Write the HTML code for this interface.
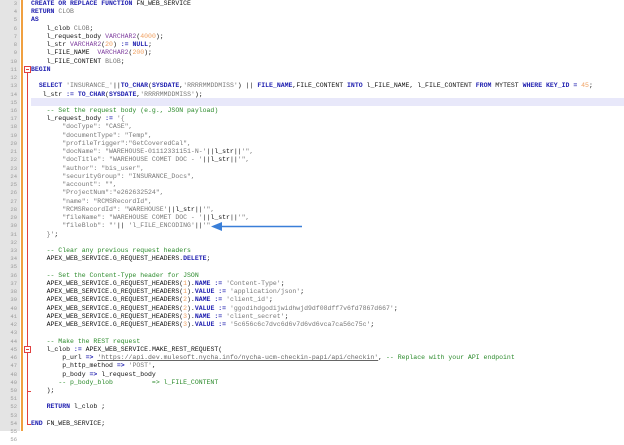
<!DOCTYPE html>
<html><head><meta charset="utf-8"><style>
*{margin:0;padding:0;box-sizing:border-box}
body{width:624px;height:431px;overflow:hidden;background:#fff;position:relative;font-family:"Liberation Mono",monospace}
#gut{position:absolute;left:0;top:0;width:20px;height:431px;background:#e4e4e4}
#bar{position:absolute;left:21px;top:0;width:2px;height:431px;background:#f0a040}
#hl{position:absolute;left:31px;right:0;top:98px;height:8.3px;background:#e8e8fa}
#nums{position:absolute;left:0;top:-16.5px;width:17px;text-align:right;font-size:5.5px;line-height:8.24px;color:#9a9a9a}
#code{position:absolute;left:31px;top:-16.5px;font-size:6.5px;line-height:8.24px;color:#111;white-space:pre}
.k{color:#2020b0;font-weight:bold}.s{color:#777}.n{color:#f0a060}.c{color:#2a8a2a}.t{color:#8040a0}.o{color:#2020b0;font-weight:bold}.u{color:#666;text-decoration:underline}
.fl{position:absolute;background:#e04040}
</style></head><body>
<div id="gut"></div><div id="bar"></div><div id="hl"></div>
<div class="fl" style="left:27px;top:72px;width:1px;height:352px"></div>
<div class="fl" style="left:27px;top:424px;width:4px;height:1px"></div>
<div style="position:absolute;left:24px;top:66px;width:7px;height:7px;border:1px solid #e04040;background:#fff"><div style="position:absolute;left:1px;top:2px;width:3px;height:1px;background:#e04040"></div></div>
<div style="position:absolute;left:24px;top:346px;width:7px;height:7px;border:1px solid #e04040;background:#fff"><div style="position:absolute;left:1px;top:2px;width:3px;height:1px;background:#e04040"></div></div>
<div class="fl" style="left:27px;top:391px;width:4px;height:1px"></div>
<div id="nums"><script>for(let i=1;i<=56;i++)document.write(i+'<br>')</script></div>
<div id="code"><span class="k">CREATE OR REPLACE FUNCTION</span> FN_WEB_SERVICE
<span class="k">RETURN</span> CLOB
<span class="k">CREATE OR REPLACE FUNCTION</span> FN_WEB_SERVICE
<span class="k">RETURN</span> <span class="s">CLOB</span>
<span class="k">AS</span>
    l_clob <span class="s">CLOB</span>;
    l_request_body <span class="t">VARCHAR2</span>(<span class="n">4000</span>);
    l_str <span class="t">VARCHAR2</span>(<span class="n">20</span>) <span class="o">:=</span> <span class="k">NULL</span>;
    l_FILE_NAME  <span class="t">VARCHAR2</span>(<span class="n">200</span>);
    l_FILE_CONTENT <span class="s">BLOB</span>;
<span class="k">BEGIN</span>

  <span class="k">SELECT</span> <span class="s">'INSURANCE_'</span>||<span class="k">TO_CHAR</span>(<span class="k">SYSDATE</span>,<span class="s">'RRRRMMDDMISS'</span>) || <span class="k">FILE_NAME</span>,FILE_CONTENT <span class="k">INTO</span> l_FILE_NAME, l_FILE_CONTENT <span class="k">FROM</span> MYTEST <span class="k">WHERE KEY_ID</span> <span class="o">=</span> <span class="n">45</span>;
   l_str <span class="o">:=</span> <span class="k">TO_CHAR</span>(<span class="k">SYSDATE</span>,<span class="s">'RRRRMMDDMISS'</span>);

    <span class="c">-- Set the request body (e.g., JSON payload)</span>
    l_request_body <span class="o">:=</span> <span class="s">'{</span>
<span class="s">        "docType": "CASE",</span>
<span class="s">        "documentType": "Temp",</span>
<span class="s">        "profileTrigger":"GetCoveredCal",</span>
<span class="s">        "docName": "WAREHOUSE-01112331151-N-'</span>||l_str||<span class="s">'",</span>
<span class="s">        "docTitle": "WAREHOUSE COMET DOC - '</span>||l_str||<span class="s">'",</span>
<span class="s">        "author": "bis_user",</span>
<span class="s">        "securityGroup": "INSURANCE_Docs",</span>
<span class="s">        "account": "",</span>
<span class="s">        "ProjectNum":"e262632524",</span>
<span class="s">        "name": "RCMSRecordId",</span>
<span class="s">        "RCMSRecordId": "WAREHOUSE'</span>||l_str||<span class="s">'",</span>
<span class="s">        "fileName": "WAREHOUSE COMET DOC - '</span>||l_str||<span class="s">'",</span>
<span class="s">        "fileBlob": "'</span>|| <span class="s">'l_FILE_ENCODING'</span>||<span class="s">'"</span>
<span class="s">    }'</span>;

    <span class="c">-- Clear any previous request headers</span>
    APEX_WEB_SERVICE.G_REQUEST_HEADERS.<span class="k">DELETE</span>;

    <span class="c">-- Set the Content-Type header for JSON</span>
    APEX_WEB_SERVICE.G_REQUEST_HEADERS(<span class="n">1</span>).<span class="k">NAME</span> <span class="o">:=</span> <span class="s">'Content-Type'</span>;
    APEX_WEB_SERVICE.G_REQUEST_HEADERS(<span class="n">1</span>).<span class="k">VALUE</span> <span class="o">:=</span> <span class="s">'application/json'</span>;
    APEX_WEB_SERVICE.G_REQUEST_HEADERS(<span class="n">2</span>).<span class="k">NAME</span> <span class="o">:=</span> <span class="s">'client_id'</span>;
    APEX_WEB_SERVICE.G_REQUEST_HEADERS(<span class="n">2</span>).<span class="k">VALUE</span> <span class="o">:=</span> <span class="s">'ggodihdgodijwidhwjd9df08dff7v6fd7867d667'</span>;
    APEX_WEB_SERVICE.G_REQUEST_HEADERS(<span class="n">3</span>).<span class="k">NAME</span> <span class="o">:=</span> <span class="s">'client_secret'</span>;
    APEX_WEB_SERVICE.G_REQUEST_HEADERS(<span class="n">3</span>).<span class="k">VALUE</span> <span class="o">:=</span> <span class="s">'5c656c6c7dvc6d6v7d6vd6vca7ca56c75c'</span>;

    <span class="c">-- Make the REST request</span>
    l_clob <span class="o">:=</span> APEX_WEB_SERVICE.MAKE_REST_REQUEST(
        p_url <span class="o">=&gt;</span> <span class="u">'https://api.dev.mulesoft.nycha.info/nycha-ucm-checkin-papi/api/checkin'</span>, <span class="c">-- Replace with your API endpoint</span>
        p_http_method <span class="o">=&gt;</span> <span class="s">'POST'</span>,
        p_body <span class="o">=&gt;</span> l_request_body
       <span class="c">-- p_body_blob          =&gt; l_FILE_CONTENT</span>
    );

    <span class="k">RETURN</span> l_clob ;

<span class="k">END</span> FN_WEB_SERVICE;
</div>
<svg style="position:absolute;left:210px;top:220px" width="95" height="14"><line x1="8" y1="6.5" x2="92" y2="6.5" stroke="#3a7fd8" stroke-width="1.5"/><polygon points="1,6.5 12,2 12,11" fill="#3a7fd8"/></svg>
</body></html>
